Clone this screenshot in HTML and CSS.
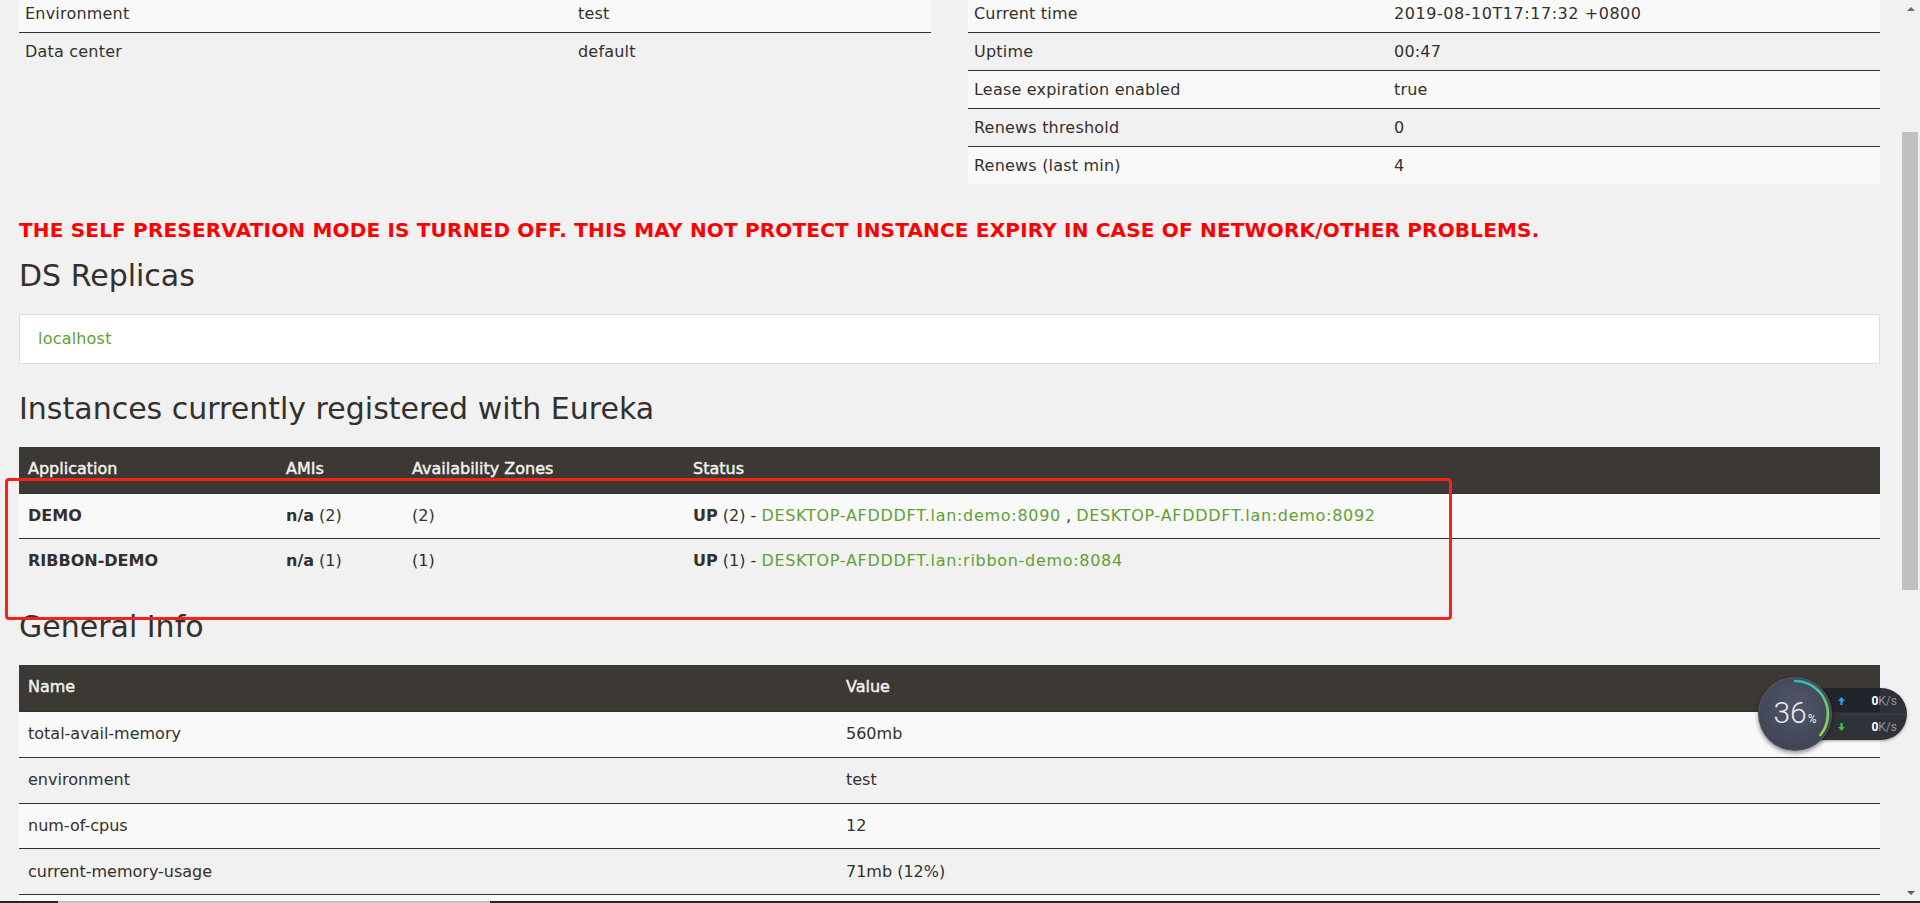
FILE: index.html
```html
<!DOCTYPE html>
<html lang="en">
<head>
    <meta charset="UTF-8">
    <meta name="viewport" content="width=device-width, initial-scale=1.0">
    <title>Eureka</title>
    <link rel="stylesheet" href="styles.css">
</head>
<body>
<div class="screen">
    <div class="viewport">
        <div class="page">

            <div class="status-row">
                <div class="status-col">
                    <table class="table status-table">
                        <colgroup><col class="left-key"><col></colgroup>
                        <tr><td>Environment</td><td>test</td></tr>
                        <tr><td>Data center</td><td>default</td></tr>
                    </table>
                </div>
                <div class="status-col">
                    <table class="table status-table">
                        <colgroup><col class="right-key"><col></colgroup>
                        <tr><td>Current time</td><td class="time">2019-08-10T17:17:32 +0800</td></tr>
                        <tr><td>Uptime</td><td>00:47</td></tr>
                        <tr><td>Lease expiration enabled</td><td>true</td></tr>
                        <tr><td>Renews threshold</td><td>0</td></tr>
                        <tr><td>Renews (last min)</td><td>4</td></tr>
                    </table>
                </div>
            </div>

            <h4 class="warning">THE SELF PRESERVATION MODE IS TURNED OFF. THIS MAY NOT PROTECT INSTANCE EXPIRY IN CASE OF NETWORK/OTHER PROBLEMS.</h4>

            <h2 class="replicas-title">DS Replicas</h2>
            <ul class="replicas">
                <li><a href="#">localhost</a></li>
            </ul>

            <h2 class="instances-title">Instances currently registered with Eureka</h2>
            <table class="table grid instances">
                <colgroup>
                    <col class="c-app"><col class="c-ami"><col class="c-zone"><col>
                </colgroup>
                <thead>
                    <tr><th>Application</th><th>AMIs</th><th>Availability Zones</th><th>Status</th></tr>
                </thead>
                <tbody>
                    <tr>
                        <td><b>DEMO</b></td>
                        <td><b>n/a</b> (2)</td>
                        <td>(2)</td>
                        <td><b>UP</b> (2) - <a class="inst" href="#">DESKTOP-AFDDDFT.lan:demo:8090</a> , <a class="inst" href="#">DESKTOP-AFDDDFT.lan:demo:8092</a></td>
                    </tr>
                    <tr>
                        <td><b>RIBBON-DEMO</b></td>
                        <td><b>n/a</b> (1)</td>
                        <td>(1)</td>
                        <td><b>UP</b> (1) - <a class="inst" href="#">DESKTOP-AFDDDFT.lan:ribbon-demo:8084</a></td>
                    </tr>
                </tbody>
            </table>

            <h2 class="general-title">General Info</h2>
            <table class="table grid general">
                <colgroup><col class="c-name"><col></colgroup>
                <thead>
                    <tr><th>Name</th><th>Value</th></tr>
                </thead>
                <tbody>
                    <tr><td>total-avail-memory</td><td>560mb</td></tr>
                    <tr><td>environment</td><td>test</td></tr>
                    <tr><td>num-of-cpus</td><td>12</td></tr>
                    <tr><td>current-memory-usage</td><td>71mb (12%)</td></tr>
                    <!-- next row is scrolled below the fold -->
                    <tr><td>&nbsp;</td><td>&nbsp;</td></tr>
                </tbody>
            </table>

        </div>

        <div class="vscroll">
            <div class="sb-arrow"><span class="tri-up"></span></div>
            <div class="sb-track"><div class="sb-thumb"></div></div>
            <div class="sb-arrow"><span class="tri-down"></span></div>
        </div>
    </div>
    <div class="hbar"><span class="hbar-thumb"></span></div>
</div>

<!-- red marker drawn over the instances table -->
<div class="annotation"></div>

<!-- floating network monitor -->
<div class="netmon">
    <div class="netmon-pill">
        <div class="net-row">
            <svg class="net-arrow" viewBox="0 0 8 9"><path d="M4 0 L8 4.5 H5.3 V9 H2.7 V4.5 H0 Z" fill="#2fa4e7"/></svg>
            <span class="net-val">0<small>K/s</small></span>
        </div>
        <div class="net-row">
            <svg class="net-arrow" viewBox="0 0 8 9"><path d="M4 9 L8 4.5 H5.3 V0 H2.7 V4.5 H0 Z" fill="#3cc046"/></svg>
            <span class="net-val">0<small>K/s</small></span>
        </div>
    </div>
    <div class="netmon-dial">
        <svg class="dial-arc" viewBox="0 0 74 74">
            <defs>
                <linearGradient id="arcGrad" gradientUnits="userSpaceOnUse" x1="40" y1="4" x2="60" y2="58">
                    <stop offset="0" stop-color="#22c2b8"/>
                    <stop offset="1" stop-color="#9fd349"/>
                </linearGradient>
            </defs>
            <path d="M37 4 A33 33 0 0 1 62.4 58" fill="none" stroke="url(#arcGrad)" stroke-width="2.6" stroke-linecap="round"/>
        </svg>
        <span class="dial-num">36</span><span class="dial-pct">%</span>
    </div>
</div>
</body>
</html>
```

FILE: styles.css
```css
body {
    margin: 0;
    background-color: #f1f1f1;
    font-family: "DejaVu Sans", sans-serif;
    font-size: 16px;
    line-height: 22px;
    color: #34302d;
    overflow: hidden;
}

a {
    color: #5fa134;
    text-decoration: none;
}

.screen {
    display: flex;
    flex-direction: column;
    height: 903px;
}

.viewport {
    display: flex;
    flex: 1;
    min-height: 0;
    overflow: hidden;
}

.page {
    flex: 1;
    min-width: 0;
    padding: 0 22px 0 19px;
    margin-top: -6px;
}

/* system status tables */
.status-row {
    display: flex;
    align-items: flex-start;
    gap: 37px;
}

.status-col {
    flex: 1;
    min-width: 0;
}

.table {
    width: 100%;
    border-collapse: separate;
    border-spacing: 0;
    table-layout: fixed;
}

.status-table td {
    padding: 7.5px 6px;
    border-top: 1px solid #34302d;
    white-space: nowrap;
    letter-spacing: 0.2px;
}

.status-table tr:nth-child(odd) td {
    background-color: #f9f9f9;
}

.status-table .time {
    letter-spacing: 0.55px;
}

.left-key {
    width: 553px;
}

.right-key {
    width: 420px;
}

.warning {
    margin: 34px 0 0;
    font-size: 20px;
    line-height: 24px;
    font-weight: bold;
    letter-spacing: 0.18px;
    color: #ff0000;
}

h2 {
    margin: 0;
    font-size: 30px;
    line-height: 36px;
    font-weight: normal;
    color: #34302d;
}

.replicas-title {
    margin-top: 16px;
}

.replicas {
    list-style: none;
    margin: 20px 0 0;
    padding: 13px 18px;
    background-color: #ffffff;
    border: 1px solid #dddddd;
}

.replicas a {
    letter-spacing: 0.2px;
}

.instances-title {
    margin-top: 27px;
}

.general-title {
    margin-top: 26px;
}

/* instances and general info */
.grid {
    margin-top: 20px;
}

.grid th {
    background-color: #3c3834;
    color: #f1f1f1;
    text-align: left;
    font-weight: normal;
    -webkit-text-stroke: 0.45px #f1f1f1;
    padding: 11px 9px 13px;
}

.grid td {
    padding: 11px 9px;
    border-top: 1px solid #34302d;
    white-space: nowrap;
}

.general td {
    padding: 11.4px 9px;
}

.grid tbody tr:nth-child(odd) td {
    background-color: #f9f9f9;
}

.inst {
    letter-spacing: 0.7px;
}

.c-app {
    width: 258px;
}

.c-ami {
    width: 126px;
}

.c-zone {
    width: 281px;
}

.c-name {
    width: 818px;
}

/* fake scrollbars */
.vscroll {
    width: 18px;
    display: flex;
    flex-direction: column;
    background-color: #f1f1f1;
}

.sb-arrow {
    height: 17px;
    display: flex;
    align-items: center;
    justify-content: center;
}

.tri-up {
    border-left: 4px solid transparent;
    border-right: 4px solid transparent;
    border-bottom: 4px solid #6a6a6a;
}

.tri-down {
    border-left: 4px solid transparent;
    border-right: 4px solid transparent;
    border-top: 4px solid #5a5a5a;
}

.sb-track {
    flex: 1;
    padding-top: 115px;
}

.sb-thumb {
    width: 16px;
    height: 458px;
    background-color: #c1c1c1;
}

.hbar {
    height: 2px;
    background-color: #262626;
    display: flex;
}

.hbar-thumb {
    margin-left: 58px;
    width: 432px;
    background-color: #c4c4c4;
}

/* overlays */
.annotation {
    position: absolute;
    left: 5px;
    top: 478px;
    width: 1441px;
    height: 136px;
    border: 3px solid #fb1f1a;
    border-radius: 4px;
}

.netmon {
    position: absolute;
    left: 1758px;
    top: 677px;
    width: 149px;
    height: 74px;
    font-family: Roboto, sans-serif;
}

.netmon-pill {
    position: absolute;
    left: 37px;
    top: 11px;
    width: 112px;
    height: 52px;
    box-sizing: border-box;
    padding-left: 43px;
    border-radius: 0 26px 26px 0;
    background-color: rgba(31, 34, 42, 0.93);
    box-shadow: 0 1px 3px rgba(0, 0, 0, 0.35);
    display: flex;
    flex-direction: column;
}

.net-row {
    flex: 1;
    display: flex;
    align-items: center;
}

.net-row + .net-row {
    border-top: 1px solid rgba(255, 255, 255, 0.08);
}

.net-arrow {
    width: 7px;
    height: 8px;
}

.net-val {
    margin-left: auto;
    margin-right: 10px;
    color: #ffffff;
    font-size: 12px;
    font-weight: bold;
}

.net-val small {
    font-size: 12px;
    font-weight: normal;
    color: #8e949f;
}

.netmon-dial {
    position: absolute;
    left: 0;
    top: 0;
    width: 74px;
    height: 74px;
    border-radius: 50%;
    background: radial-gradient(circle at 50% 40%, #50566a, #3b3f4c);
    box-shadow: 0 2px 4px rgba(0, 0, 0, 0.45), inset 0 0 0 1px rgba(255, 255, 255, 0.08);
    display: flex;
    align-items: baseline;
    justify-content: center;
    padding-top: 20px;
    box-sizing: border-box;
    color: #e8eaee;
}

.dial-arc {
    position: absolute;
    left: 0;
    top: 0;
    width: 74px;
    height: 74px;
}

.dial-num {
    font-size: 30px;
    line-height: 32px;
    font-weight: 300;
}

.dial-pct {
    font-size: 12px;
    margin-left: 1px;
}
```
